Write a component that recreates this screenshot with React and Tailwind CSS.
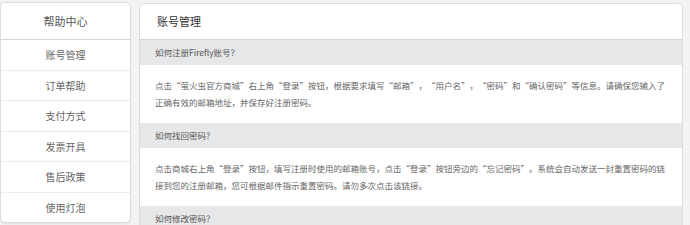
import React from "react";

const menu = ["账号管理", "订单帮助", "支付方式", "发票开具", "售后政策", "使用灯泡"];

const faqs = [
    {
        q: "如何注册Firefly账号？",
        a: "点击“萤火虫官方商城”右上角“登录”按钮，根据要求填写“邮箱”，“用户名”，“密码”和“确认密码”等信息。请确保您输入了正确有效的邮箱地址，并保存好注册密码。",
    },
    {
        q: "如何找回密码？",
        a: "点击商城右上角“登录”按钮，填写注册时使用的邮箱账号，点击“登录”按钮旁边的“忘记密码”。系统会自动发送一封重置密码的链接到您的注册邮箱，您可根据邮件指示重置密码。请勿多次点击该链接。",
    },
    {
        q: "如何修改密码？",
        a: null,
    },
];

export default function App() {
    const font = { fontFamily: '"Noto Sans CJK SC", "Liberation Sans", sans-serif' };
    return (
        <div
            className="h-[225px] w-[690px] overflow-hidden bg-[#f3f3f3] flex items-start gap-[8px] pt-[2px] pr-[7px] [text-spacing-trim:space-all]"
            style={font}
        >
            {/* sidebar */}
            <div className="w-[131px] h-[221px] shrink-0 bg-white border border-[#dcdcdc] rounded-[5px] shadow-[0_1px_2px_rgba(0,0,0,0.08)] flex flex-col overflow-hidden">
                <div className="h-[37px] shrink-0 flex items-center justify-center text-[11px] text-[#555] border-b border-[#d6d6d6]">
                    帮助中心
                </div>
                {menu.map((m, i) => (
                    <div
                        key={m}
                        className={
                            "flex-1 flex items-center justify-center text-[10px] text-[#666] " +
                            (i < menu.length - 1 ? "border-b border-[#ececec]" : "")
                        }
                    >
                        {m}
                    </div>
                ))}
            </div>

            {/* main */}
            <div className="flex-1 h-[240px] mt-[1px] bg-white border border-[#dcdcdc] rounded-[5px] overflow-hidden">
                <div className="h-[36px] flex items-center pl-[17px] text-[11px] text-[#333] border-b border-[#d6d6d6]">
                    账号管理
                </div>
                {faqs.map((f) => (
                    <div key={f.q}>
                        <div className="h-[25px] flex items-center px-[15px] bg-[#e6e7e8] text-[8.5px] text-[#555]">
                            {f.q}
                        </div>
                        {f.a && (
                            <div className="px-[15px] py-[12px] text-[8.5px] leading-[17px] text-[#666]">
                                {f.a}
                            </div>
                        )}
                    </div>
                ))}
            </div>
        </div>
    );
}
